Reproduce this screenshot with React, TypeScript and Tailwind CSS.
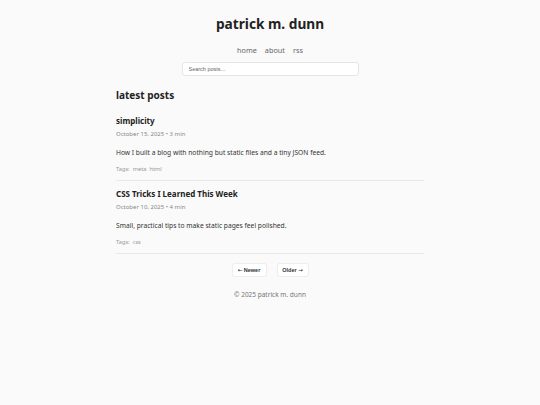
import React from "react";

const posts = [
  {
    title: "simplicity",
    date: "October 15, 2025 • 3 min",
    desc: "How I built a blog with nothing but static files and a tiny JSON feed.",
    tags: ["meta", "html"],
  },
  {
    title: "CSS Tricks I Learned This Week",
    date: "October 10, 2025 • 4 min",
    desc: "Small, practical tips to make static pages feel polished.",
    tags: ["css"],
  },
];

export default function App() {
  return (
    <div
      className="min-h-[405px] w-full bg-[#fafafa] text-[#222]"
      style={{ fontFamily: "'Noto Sans', 'Open Sans', sans-serif" }}
    >
      <div className="mx-auto flex w-[308px] flex-col">
        <header className="flex flex-col items-center pt-[14px]">
          <h1 className="text-[13.7px] font-bold leading-[20px] text-[#222]">patrick m. dunn</h1>
          <nav className="mt-[11px] flex gap-[8px] text-[7.3px] leading-[10px] text-[#666]">
            <a>home</a>
            <a>about</a>
            <a>rss</a>
          </nav>
          <input
            placeholder="Search posts..."
            className="mt-[7px] h-[14px] w-[177px] rounded-[3px] border border-[#e6e6e6] bg-white px-[6px] text-[5.5px] text-[#333] placeholder:text-[#666] outline-none"
            style={{ fontFamily: "'Liberation Sans', Arial, sans-serif" }}
          />
        </header>

        <main className="mt-[12px]">
          <h2 className="mb-[6px] text-[10px] font-bold leading-[14px] text-[#222]">latest posts</h2>
          {posts.map((p) => (
            <article key={p.title} className="border-b border-[#e8e8e8] pb-[7px] pt-[7px]">
              <h3 className="text-[8px] font-bold leading-[12px] text-[#222]">{p.title}</h3>
              <div className="mt-[3px] text-[6px] leading-[8px] text-[#888]">{p.date}</div>
              <p className="mt-[10px] text-[6.7px] leading-[9px] text-[#333]">{p.desc}</p>
              <div className="mt-[8px] flex gap-[3px] text-[5.7px] leading-[8px] text-[#999]">
                <span>Tags:</span>
                {p.tags.map((t) => (
                  <span key={t}>{t}</span>
                ))}
              </div>
            </article>
          ))}

          <div
            className="mt-[9px] flex justify-center gap-[10px]"
            style={{ fontFamily: "'Liberation Sans', 'DejaVu Sans', Arial, sans-serif" }}
          >
            <button className="h-[14px] w-[35px] rounded-[3px] border border-[#eee] bg-white text-[5.5px] font-semibold text-[#333] shadow-[0_0_1px_rgba(0,0,0,0.05)]">
              <span style={{ fontFamily: "'DejaVu Sans', sans-serif" }}>←</span> Newer
            </button>
            <button className="h-[14px] w-[32px] rounded-[3px] border border-[#eee] bg-white text-[5.5px] font-semibold text-[#333] shadow-[0_0_1px_rgba(0,0,0,0.05)]">
              Older <span style={{ fontFamily: "'DejaVu Sans', sans-serif" }}>→</span>
            </button>
          </div>
        </main>

        <footer className="mt-[13px] text-center text-[6.5px] leading-[9px] text-[#777]">
          © 2025 patrick m. dunn
        </footer>
      </div>
    </div>
  );
}
